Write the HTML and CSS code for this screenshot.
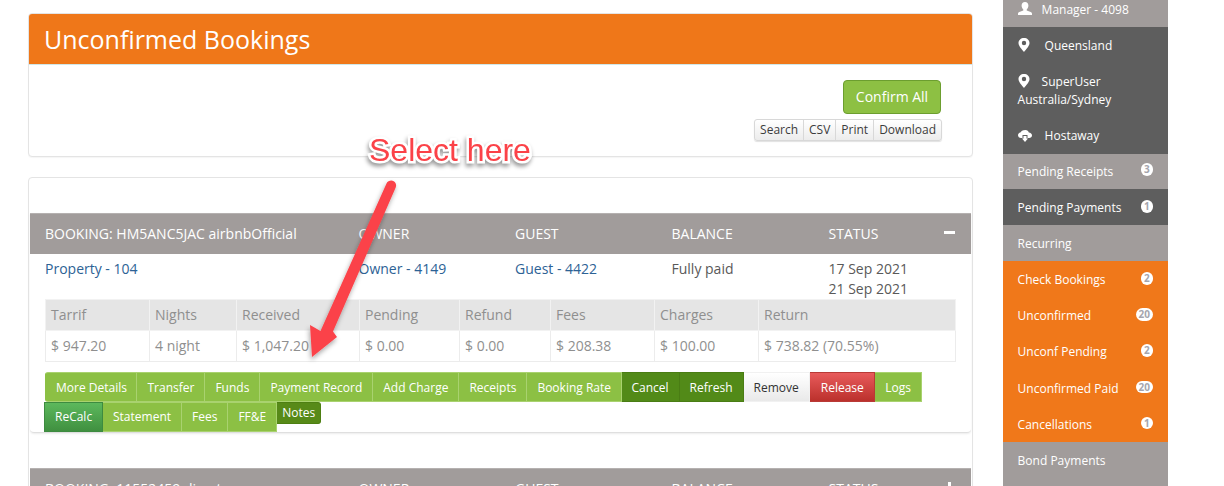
FILE: index.html
```html
<!DOCTYPE html>
<html lang="en">
<head>
<meta charset="utf-8">
<title>Unconfirmed Bookings</title>
<link rel="stylesheet" href="styles.css">
</head>
<body>
<div class="page">
  <main class="main">
    <section class="panel top-panel">
      <h1 class="title">Unconfirmed Bookings</h1>
      <div class="top-body">
        <button class="confirm">Confirm All</button>
        <div class="tools"><span>Search</span><span>CSV</span><span>Print</span><span>Download</span></div>
      </div>
    </section>
    <section class="panel list-panel">
      <article class="booking">
        <div class="bar">
          <div class="c1">BOOKING: HM5ANC5JAC airbnbOfficial</div><div class="c2">OWNER</div><div class="c3">GUEST</div><div class="c4">BALANCE</div><div class="c5">STATUS</div><div class="toggle minus"></div>
        </div>
        <div class="info">
          <div class="c1"><a>Property - 104</a></div><div class="c2"><a>Owner - 4149</a></div><div class="c3"><a>Guest - 4422</a></div><div class="c4">Fully paid</div><div class="c5">17 Sep 2021<br>21 Sep 2021</div>
        </div>
        <table class="figures">
          <tr><th class="w1">Tarrif</th><th class="w2">Nights</th><th class="w3">Received</th><th class="w4">Pending</th><th class="w5">Refund</th><th class="w6">Fees</th><th class="w7">Charges</th><th>Return</th></tr>
          <tr><td>$ 947.20</td><td>4 night</td><td>$ 1,047.20</td><td>$ 0.00</td><td>$ 0.00</td><td>$ 208.38</td><td>$ 100.00</td><td>$ 738.82 (70.55%)</td></tr>
        </table>
        <div class="actions row1">
          <span class="btn first">More Details</span><span class="btn">Transfer</span><span class="btn">Funds</span><span class="btn">Payment Record</span><span class="btn">Add Charge</span><span class="btn">Receipts</span><span class="btn rate">Booking Rate</span><span class="btn dark">Cancel</span><span class="btn dark">Refresh</span><span class="btn light">Remove</span><span class="btn red">Release</span><span class="btn logs">Logs</span>
        </div>
        <div class="actions row2">
          <span class="btn recalc">ReCalc</span><span class="btn">Statement</span><span class="btn">Fees</span><span class="btn">FF&amp;E</span><span class="btn notes">Notes</span>
        </div>
      </article>
      <article class="booking next">
        <div class="bar">
          <div class="c1">BOOKING: 11552459 direct</div><div class="c2">OWNER</div><div class="c3">GUEST</div><div class="c4">BALANCE</div><div class="c5">STATUS</div><div class="toggle plus"></div>
        </div>
      </article>
    </section>
  </main>
  <aside class="side">
    <div class="item grey head"><svg class="ico" viewBox="0 0 14 14"><path d="M7 0c2.200 0 3.400 1.600 3.400 3.600 0 1.700-.8 3.100-1.700 3.900v1.100l4 1.500c.8.300 1.300.9 1.300 1.700V13H0v-1.200c0-.8.500-1.400 1.300-1.700l4-1.500V7.500c-.9-.8-1.700-2.200-1.700-3.900C3.600 1.600 4.800 0 7 0z"/></svg><span class="gap-s">Manager - 4098</span></div>
    <div class="item dark-i"><svg class="ico pin" viewBox="0 0 12 14"><path fill-rule="evenodd" d="M6 0c3.200 0 5.500 2.100 5.500 5C11.500 8 8 11.500 6 14 4 11.500.5 8 .5 5 .5 2.100 2.800 0 6 0zm0 2.800a2.200 2.200 0 100 4.400 2.200 2.200 0 000-4.400z"/></svg><span class="gap-l">Queensland</span></div>
    <div class="item dark-i two"><svg class="ico pin" viewBox="0 0 12 14"><path fill-rule="evenodd" d="M6 0c3.200 0 5.500 2.100 5.500 5C11.500 8 8 11.500 6 14 4 11.500.5 8 .5 5 .5 2.100 2.800 0 6 0zm0 2.800a2.200 2.200 0 100 4.400 2.200 2.200 0 000-4.400z"/></svg><span class="gap-m">SuperUser</span><br>Australia/Sydney</div>
    <div class="item dark-i host"><svg class="ico" viewBox="0 0 14 14"><path fill-rule="evenodd" d="M7.500 2c1.700 0 3 1.100 3.300 2.600 1.800.1 3.200 1.300 3.200 2.900S12.700 10 11.200 10H9.500V7h-5v3H3c-1.700 0-3-1.100-3-2.700 0-1.400 1-2.500 2.400-2.700C3 3.300 4.400 2 7.500 2z"/><path d="M5.500 8h3v2.500h1.500L7 14l-3-3.500h1.500z"/></svg><span class="gap-h">Hostaway</span></div>
    <div class="item grey link receipts"><span>Pending Receipts</span><b class="badge">3</b></div>
    <div class="item dark-i link"><span>Pending Payments</span><b class="badge">1</b></div>
    <div class="item grey link"><span>Recurring</span></div>
    <div class="orange">
      <div class="item link"><span>Check Bookings</span><b class="badge">2</b></div>
      <div class="item link"><span>Unconfirmed</span><b class="badge">20</b></div>
      <div class="item link"><span>Unconf Pending</span><b class="badge">2</b></div>
      <div class="item link"><span>Unconfirmed Paid</span><b class="badge">20</b></div>
      <div class="item link"><span>Cancellations</span><b class="badge">1</b></div>
    </div>
    <div class="item grey link last"><span>Bond Payments</span></div>
  </aside>
</div>
<svg class="arrow" viewBox="0 0 1224 486" width="1224" height="486">
  <defs><filter id="sh" x="-30%" y="-10%" width="160%" height="130%"><feDropShadow dx="-1" dy="3" stdDeviation="2.500" flood-color="#000" flood-opacity=".35"/></filter></defs>
  <path filter="url(#sh)" fill="#fb4248" d="M386.500 183.500c1.500-3 5-3.500 7.200-2.300 2.200 1.200 3 3.800 2 6.300L333 331.500l4 5.500-25 20-2-32 10.500 6z"/>
</svg>
<div class="note-text">Select here</div>
</body>
</html>
```
FILE: styles.css
```css
* { box-sizing: border-box; }
html, body { margin: 0; padding: 0; height: 486px; overflow: hidden; background: #fff; }
body { font-family: "Open Sans", sans-serif; font-size: 14px; color: #555; position: relative; }
.page { display: flex; align-items: flex-start; height: 486px; overflow: hidden; padding-left: 28px; }
.main { width: 945px; padding-top: 13px; flex: none; }
.panel { border: 1px solid #e4e4e4; border-radius: 4px; background: #fff; box-shadow: 0 1px 1px rgba(0,0,0,.04); }
.top-panel { height: 144px; }
.title { margin: 0; height: 51px; padding-left: 15px; background: #ef7719; color: #fff; font-size: 25px; font-weight: 400; line-height: 50px; border-bottom: 1px solid #cfe7e8; border-radius: 3px 3px 0 0; }
.top-body { display: flex; flex-direction: column; align-items: flex-end; padding: 15px 31px 0 0; }
.confirm { width: 98px; height: 34px; border: 1px solid #6c9e2f; border-radius: 4px; background: #8dc043; color: #fff; font: 400 14px/20px "Open Sans", sans-serif; padding: 0; }
.tools { display: flex; margin-top: 5px; margin-right: -1px; height: 22px; border: 1px solid #d8d8d8; border-radius: 3px; background: linear-gradient(#fff, #ececec); box-shadow: 0 1px 1px rgba(0,0,0,.12); font-size: 12px; line-height: 20px; color: #3c3c3c; }
.tools span { padding: 0 5px; border-left: 1px solid #d8d8d8; }
.tools span:first-child { border-left: 0; }
.list-panel { margin-top: 20px; height: 320px; padding: 35px 1px 0; }
.booking { border-bottom: 1px solid #dfdfdf; border-radius: 0 0 4px 4px; height: 220px; box-shadow: 0 1px 2px rgba(0,0,0,.08); }
.booking.next { margin-top: 35px; border: 0; box-shadow: none; }
.bar, .info { display: flex; padding-left: 15px; position: relative; }
.bar { height: 41px; background: #a19c9b; color: #fff; line-height: 40px; border-top: 1px solid #b5b1b0; }
.c1 { width: 313.500px; flex: none; }
.c2, .c3 { width: 156.500px; flex: none; }
.c4 { width: 157px; flex: none; }
.c5 { width: 120px; flex: none; }
.info { height: 45px; padding-top: 5px; line-height: 20px; color: #595959; }
.info a { color: #2d6295; }
.toggle { position: absolute; right: 16px; background: #fff; }
.minus { top: 17px; width: 11px; height: 3px; }
.plus { top: 13px; width: 11px; height: 11px; background: linear-gradient(#fff,#fff) center/3px 11px no-repeat, linear-gradient(#fff,#fff) center/11px 3px no-repeat; }
.figures { width: 911px; margin-left: 15px; border-collapse: collapse; table-layout: fixed; color: #8f8f8f; }
.figures th, .figures td { height: 31px; padding: 0 5px 2px; border: 1px solid #ececec; font-weight: 400; text-align: left; white-space: nowrap; color: #8f8f8f; }
.figures th { background: #e5e5e5; border-color: #f2f2f2; }
.w1 { width: 104px; } .w2 { width: 87px; } .w3 { width: 123px; } .w4 { width: 100px; } .w5 { width: 91px; } .w6 { width: 104px; } .w7 { width: 104px; }
.actions { display: flex; font-size: 12px; color: #fff; }
.row1 { margin: 10px 0 0 15px; height: 30px; }
.row2 { margin: 0 0 0 14px; height: 30px; align-items: flex-start; }
.btn { flex: none; padding: 0 10px; line-height: 28px; height: 30px; background: #8cc044; border: 1px solid #a9d26f; border-width: 1px 1px 1px 0; }
.row1 .btn { line-height: 30px; }
.first { border-radius: 3px 0 0 3px; border-left: 1px solid #8cc044; padding-right: 9.500px; }
.rate { padding-right: 9.500px; }
.logs { padding: 0 10px 0 10.500px; }
.dark { background: #528a18; border-color: #4a7d14; }
.light { background: linear-gradient(#fff, #e9e9e9); color: #333; border-color: #f1f1f1; }
.red { background: linear-gradient(#e85b5b, #bb312c); border-color: #b93a36; padding: 0 10px 0 11px; }
.recalc { background: linear-gradient(#5cb85c, #409040); border: 1px solid #3d8b40; width: 59px; padding: 0 10px; line-height: 28px; }
.row2 .notes { height: 22px; line-height: 19px; padding: 0 5px; background: #578a18; border-color: #4d7f12; border-radius: 0 3px 3px 0; }
.side { width: 165px; margin-left: 30px; flex: none; font-size: 12px; color: #fff; }
.item { padding-left: 14.600px; line-height: 18px; position: relative; }
.grey { background: #a19c9b; }
.dark-i { background: #5e5e5e; }
.orange { background: #f0781a; }
.head { height: 27px; line-height: 20px; }
.dark-i:not(.link) { padding-top: 10px; height: 36px; }
.dark-i.two { height: 54px; }
.dark-i.host { height: 37px; }
.link { display: flex; height: 36px; padding-top: 1px; line-height: 36px; white-space: nowrap; }
.receipts { height: 35px; line-height: 35px; padding-top: 0; }
.orange .link { height: 36.200px; }
.last { height: 44px; }
.ico { width: 14px; height: 14px; fill: #fff; vertical-align: -2px; }
.pin { width: 12px; }
.gap-s { margin-left: 10px; }
.gap-m { margin-left: 12px; }
.gap-l { margin-left: 15px; }
.gap-h { margin-left: 13px; }
.badge { position: absolute; right: 15px; top: 11px; min-width: 12.500px; height: 12.500px; padding: 0 3px; border-radius: 7px; background: #fff; color: #a5a5ad; font-size: 10px; font-weight: 700; line-height: 12.500px; text-align: center; }
.receipts .badge { top: 9px; }
.note-text { position: absolute; left: 369px; top: 131px; font: 400 32px/38px "Liberation Sans", sans-serif; color: #fb4248; -webkit-text-stroke: 5px #fff; paint-order: stroke fill; filter: drop-shadow(-1px 3px 2px rgba(0,0,0,.4)); white-space: nowrap; }
.arrow { position: absolute; left: 0; top: 0; pointer-events: none; }
```
